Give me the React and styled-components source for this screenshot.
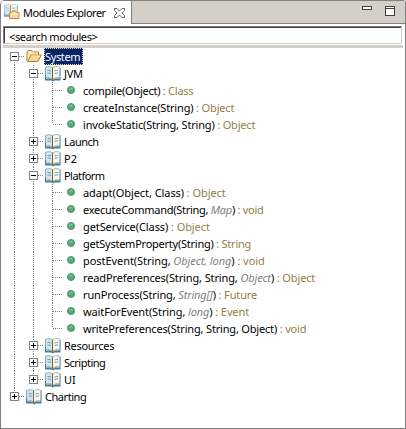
import React from "react";
import styled, { createGlobalStyle, css } from "styled-components";

const GlobalStyle = createGlobalStyle`
  * { box-sizing: border-box; }
  body { margin: 0; background: #fff; }
`;

const View = styled.div`
  width: 406px;
  height: 429px;
  display: flex;
  flex-direction: column;
  background: #fff;
  border: 1px solid #808080;
  border-top: 0;
  border-radius: 5px 3px 0 0;
  overflow: hidden;
  font: 11px/17px Tahoma, "Noto Sans", sans-serif;
  color: #000;
  white-space: pre;
`;

const TabBar = styled.div`
  height: 24px;
  flex: none;
  display: flex;
  justify-content: space-between;
  background: #d4d0c8;
  border-top: 1px solid #808080;
  border-bottom: 1px solid #808080;
`;

const Tab = styled.div`
  width: 131px;
  height: 23px;
  display: flex;
  align-items: center;
  background: #fff;
  border-right: 1px solid #808080;
  border-radius: 4px 0 0 0;
  padding: 0 0 0 3px;
`;

const TabTitle = styled.span`
  width: 91px;
  flex: none;
  margin-left: 2px;
  letter-spacing: ${(p) => p.$track}px;
`;

const WindowButtons = styled.div`
  display: flex;
  gap: 13px;
  padding: 5px 10px 0 0;
`;

const Search = styled.div`
  height: 18px;
  flex: none;
  margin: 2px 3px 1px 2px;
  padding-left: 5px;
  line-height: 19px;
  border: 1px solid #d4d0c8;
  border-top-color: #808080;
  border-left-color: #808080;
  box-shadow: inset 1px 1px 0 #404040;
  letter-spacing: ${(p) => p.$track}px;
`;

const Divider = styled.div`
  height: 3px;
  flex: none;
  margin: 0 2px;
  background: #d4d0c8;
`;

const Tree = styled.div`
  display: flex;
  flex-direction: column;
  padding-left: 4px;
`;

const Row = styled.div`
  display: flex;
  height: 17px;
`;

const dotsV = "repeating-linear-gradient(to bottom, #808080 0 1px, transparent 1px 2px)";
const dotsH = "repeating-linear-gradient(to right, transparent 0 1px, #808080 1px 2px)";

const Guide = styled.div`
  width: 19px;
  height: 17px;
  flex: none;
  display: flex;
  align-items: center;
  padding-left: 5px;
  background-repeat: no-repeat;
  ${(p) => {
    const layers = [];
    if (p.$up) layers.push([dotsV, "9px 0", "1px 8px"]);
    if (p.$down) layers.push([dotsV, "9px 8px", "1px 9px"]);
    if (p.$across) layers.push([dotsH, "9px 8px", "10px 1px"]);
    return css`
      background-image: ${layers.map((l) => l[0]).join(",") || "none"};
      background-position: ${layers.map((l) => l[1]).join(",") || "0 0"};
      background-size: ${layers.map((l) => l[2]).join(",") || "auto"};
    `;
  }}
`;

const IconCell = styled.div`
  width: 21px;
  height: 17px;
  flex: none;
  padding: ${(p) => (p.$raised ? 0 : 1)}px 0 0 2px;
  line-height: 0;
`;

const Label = styled.span`
  height: 17px;
  margin-left: -1px;
  padding: 0 3px 0 1px;
  letter-spacing: ${(p) => p.$track || 0}px;
  ${(p) => p.$selected && css`
    color: #fff;
    background: #0a246a;
    outline: 1px dotted #f5db95;
    outline-offset: -1px;
  `}
`;

const Optional = styled.i`
  color: #808080;
`;

const ReturnType = styled.span`
  color: #957d47;
`;

const Expander = ({ open }) => (
  <svg width="9" height="9" shapeRendering="crispEdges">
    <rect x=".5" y=".5" width="8" height="8" fill="#fff" stroke="#808080" />
    <path d={open ? "M2 4.5h5" : "M2 4.5h5M4.5 2v5"} stroke="#000" />
  </svg>
);

const BookShape = () => (
  <>
    <path d="M0 1.500h15.500V14.500H9.500l-1.500 1-1.500-1H0z" fill="#427b9e" />
    <path d="M0 1.500h1V9H0zM14.500 1.500h1V9h-1z" fill="#78aec4" />
    <path d="M1 1Q5-.2 7.500 1.500v11.200Q5 10.800 1 11.800z" fill="#d5e3ea" />
    <path d="M14.500 1Q10.500-.2 8 1.500v11.200q2.500-1.900 6.500-.9z" fill="#fbf7e2" />
    <path d="M1 12.300q4-1 6.700 1 2.800-2 6.800-1" fill="none" stroke="#d3c9a5" strokeWidth="1" />
    <path d="M7.500 1.500v12.500" stroke="#6f6148" strokeWidth="1" />
    <path d="M1 1Q5-.2 7.500 1.500Q10.500-.2 14.500 1" fill="none" stroke="#9ba898" strokeWidth=".8" />
    <path d="M2.500 4.500h1.500l2 .5M2.500 7h1.500l2 .5M9.500 5l2-.5H13M9.500 7.500l2-.5H13" fill="none" stroke="#6f99c8" strokeWidth="1" />
  </>
);

const Book = () => (
  <svg width="16" height="16"><BookShape /></svg>
);

const Folder = () => (
  <svg width="16" height="16">
    <path d="M1 13V4l1-1.500h4L7.500 4h5v3" fill="#fdeabb" stroke="#b87e2c" />
    <path d="M1.500 13.500 5 7h10.300L12 13.500z" fill="#f7d68f" stroke="#b87e2c" strokeLinejoin="round" />
    <path d="M5.500 8h8.500" stroke="#fff0c4" />
  </svg>
);

const Method = () => (
  <svg width="16" height="16">
    <circle cx="7" cy="7" r="3.600" fill="#58a873" stroke="#478e60" strokeWidth=".8" />
    <path d="M4.700 6.500q2-3 4.500-.2z" fill="#92caa0" />
  </svg>
);

const ViewIcon = () => (
  <svg width="17" height="17">
    <g opacity=".75" transform="scale(.88)"><BookShape /></g>
    <path d="M5.500 14.500v-6h2l1-1.500h3l1 1.500h2.500v6z" fill="#f9d79d" stroke="#c98a3d" />
    <path d="M6.500 10h8" stroke="#fff0c8" />
  </svg>
);

const CloseIcon = () => (
  <svg width="11" height="10">
    <path d="M.5.5h2.500l2.500 2.500L8 .5h2.500V2.500L8 5l2.500 2.500v2H8L5.500 7 3 9.500H.5v-2L3 5 .5 2.500z" fill="#fff" stroke="#505050" strokeWidth=".9" />
  </svg>
);

const Minimize = () => (
  <svg width="10" height="4" shapeRendering="crispEdges"><rect x=".5" y=".5" width="9" height="3" fill="#fff" stroke="#404040" /></svg>
);

const Maximize = () => (
  <svg width="10" height="10" shapeRendering="crispEdges">
    <rect x=".5" y=".5" width="9" height="9" fill="#fff" stroke="#404040" /><path d="M0 2.500h10" stroke="#404040" />
  </svg>
);

const method = (name, required, optional, type, track, last) => ({ kind: "method", name, required, optional, type, track, last });

const rows = [
  { kind: "root", name: "System", open: true, first: true, selected: true, track: -0.35 },
  { kind: "module", name: "JVM", open: true, track: -0.3 },
  method("compile", "Object", [], "Class", -0.26),
  method("createInstance", "String", [], "Object", -0.16),
  method("invokeStatic", "String, String", [], "Object", -0.18, true),
  { kind: "module", name: "Launch", track: -0.5 },
  { kind: "module", name: "P2", track: 0 },
  { kind: "module", name: "Platform", open: true, track: -0.55 },
  method("adapt", "Object, Class", [], "Object", -0.07),
  method("executeCommand", "String", ["Map"], "void", -0.27),
  method("getService", "Class", [], "Object", -0.09),
  method("getSystemProperty", "String", [], "String", -0.24),
  method("postEvent", "String", ["Object", "long"], "void", -0.06),
  method("readPreferences", "String, String", ["Object"], "Object", -0.13),
  method("runProcess", "String", ["String[]"], "Future", -0.14),
  method("waitForEvent", "String", ["long"], "Event", -0.11),
  method("writePreferences", "String, String, Object", [], "void", -0.18, true),
  { kind: "module", name: "Resources", track: -0.3 },
  { kind: "module", name: "Scripting", track: -0.5 },
  { kind: "module", name: "UI", last: true, track: 0 },
  { kind: "root", name: "Charting", last: true, track: -0.45 },
];

function TreeRow({ row }) {
  const { kind, open, first, last, name } = row;
  if (kind === "root") {
    return (
      <Row>
        <Guide $up={!first} $down={!last} $across><Expander open={open} /></Guide>
        <IconCell $raised={open}>{open ? <Folder /> : <Book />}</IconCell>
        <Label $selected={row.selected} $track={row.track}>{name}</Label>
      </Row>
    );
  }
  if (kind === "module") {
    return (
      <Row>
        <Guide $up $down />
        <Guide $up $down={!last} $across><Expander open={open} /></Guide>
        <IconCell><Book /></IconCell>
        <Label $track={row.track}>{name}</Label>
      </Row>
    );
  }
  return (
    <Row>
      <Guide $up $down />
      <Guide $up $down />
      <Guide $up $down={!last} $across />
      <IconCell><Method /></IconCell>
      <Label $track={row.track}>
        {name}({row.required}
        {row.optional.length > 0 && <>, <Optional>{row.optional.join(", ")}</Optional></>})
        <ReturnType>{" : " + row.type}</ReturnType>
      </Label>
    </Row>
  );
}

export default function App() {
  return (
    <>
      <GlobalStyle />
      <View>
        <TabBar>
          <Tab>
            <ViewIcon />
            <TabTitle $track={-0.5}>Modules Explorer</TabTitle>
            <CloseIcon />
          </Tab>
          <WindowButtons><Minimize /><Maximize /></WindowButtons>
        </TabBar>
        <Search $track={-0.36}>{"<search modules>"}</Search>
        <Divider />
        <Tree>{rows.map((row) => <TreeRow key={row.name} row={row} />)}</Tree>
      </View>
    </>
  );
}
